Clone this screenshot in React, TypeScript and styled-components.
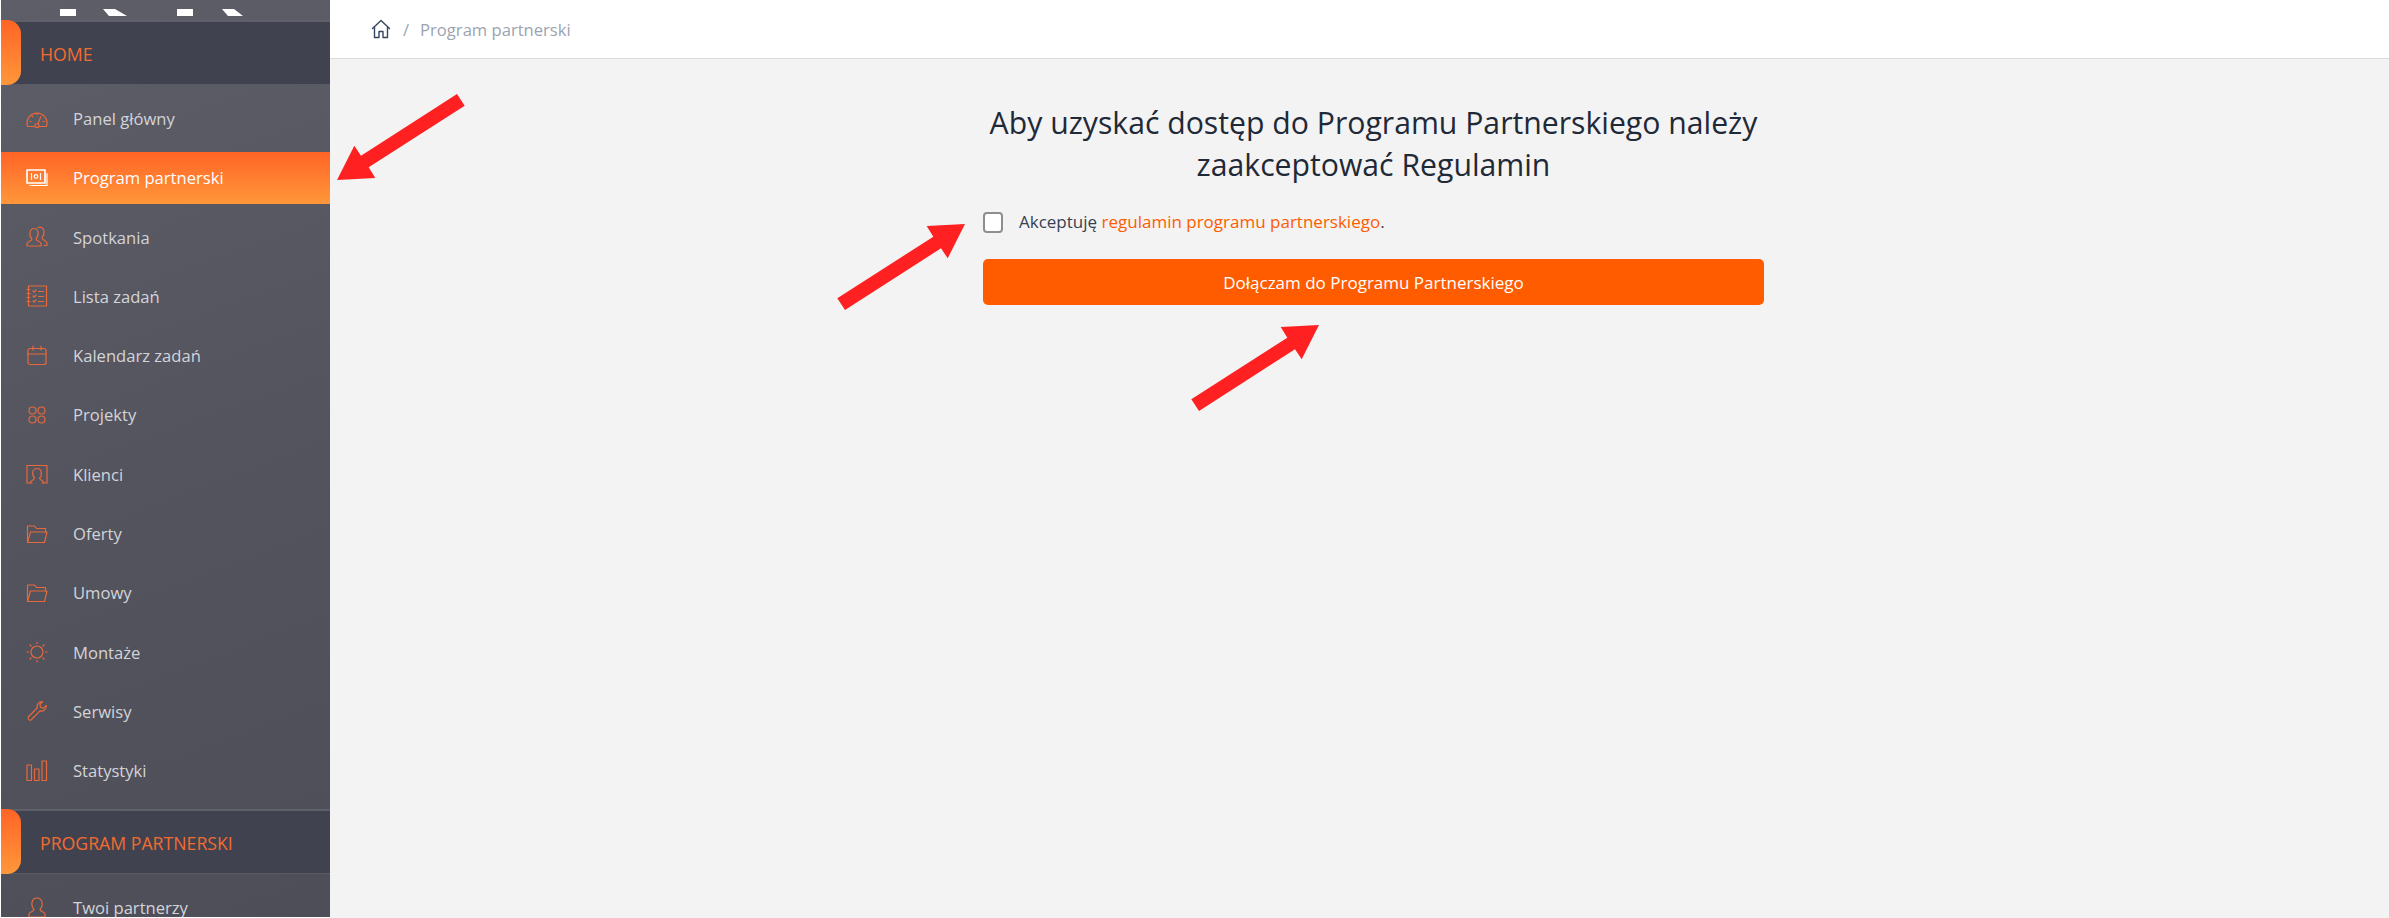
import styled, { createGlobalStyle } from 'styled-components';
import type { ReactNode } from 'react';

const GlobalStyle = createGlobalStyle`
    html, body {
        margin: 0;
        padding: 0;
        background: #FFFFFF;
    }

    * {
        box-sizing: border-box;
    }
`

const Page = styled.div`
    position: relative;
    display: flex;
    width: 2389px;
    height: 918px;
    overflow: hidden;
    font-family: "Open Sans", "Noto Sans", sans-serif;
`

const Sidebar = styled.aside`
    flex: 0 0 329px;
    height: 917px;
    margin-left: 1px;
    overflow: hidden;
    background: linear-gradient(160deg, #5E5E68 0%, #54545E 50%, #4E4E58 100%);
`

const LogoStrip = styled.div`
    height: 20px;
    padding-left: 59px;
`

const SectionHeader = styled.div`
    display: flex;
    align-items: center;
    height: 65px;
    background: #40434F;
    border-top: 2px solid #5F5F69;
    border-bottom: 1px solid #5A5A64;
`

const SectionTab = styled.span`
    flex: 0 0 20px;
    align-self: flex-start;
    height: 65px;
    margin-top: -2px;
    border-radius: 0 14px 14px 0;
    background: linear-gradient(180deg, #FF6426 0%, #FF973A 100%);
`

const SectionLabel = styled.span`
    margin: 2px 0 0 19px;
    color: #F26B30;
    font-size: 17.7px;
    font-weight: 500;
`

const NavList = styled.nav`
    display: flex;
    flex-direction: column;
    gap: 7.3px;
    padding: 8px 0 11.7px;
`

const NavRow = styled.a<{ $active?: boolean }>`
    display: flex;
    flex: 0 0 52px;
    align-items: center;
    padding: 0 0 1px 25px;
    color: ${({ $active }) => ($active ? '#FFFFFF' : '#D3D4D9')};
    background: ${({ $active }) => ($active ? 'linear-gradient(180deg, #FF6426 0%, #FF973A 100%)' : 'transparent')};
    font-size: 16.6px;
`

const NavIcon = styled.svg<{ $active?: boolean }>`
    flex: 0 0 22px;
    width: 22px;
    height: 22px;
    margin-right: 25px;
    fill: none;
    stroke: ${({ $active }) => ($active ? '#FFFFFF' : '#E8683A')};
    stroke-width: 1.2;
    stroke-linecap: round;
    stroke-linejoin: round;
`

const Main = styled.main`
    flex: 1;
    display: flex;
    flex-direction: column;
    background: #F3F3F3;
`

const Topbar = styled.header`
    display: flex;
    align-items: center;
    flex: 0 0 59px;
    padding-left: 41px;
    background: #FFFFFF;
    border-bottom: 1px solid #DCDCDC;
    color: #9CA3AF;
    font-size: 16.6px;
`

const HomeIcon = styled.svg`
    width: 20px;
    height: 20px;
    fill: none;
    stroke: #374660;
    stroke-width: 1.4;
    stroke-linejoin: round;
    stroke-linecap: round;
`

const Slash = styled.span`
    margin: 0 11px 0 12px;
`

const Panel = styled.section`
    display: flex;
    flex-direction: column;
    width: 781px;
    margin-left: 653px;
    padding-top: 43px;
`

const Title = styled.h1`
    margin: 0;
    color: #1F2937;
    font-size: 30.2px;
    font-weight: 500;
    line-height: 42px;
    text-align: center;
`

const AcceptRow = styled.label`
    display: flex;
    align-items: center;
    gap: 16px;
    margin-top: 24px;
    color: #374151;
    font-size: 17px;
    line-height: 24px;
`

const Checkbox = styled.input`
    appearance: none;
    width: 20px;
    height: 21px;
    margin: 0;
    background: #FFFFFF;
    border: 2px solid #8E8E8E;
    border-radius: 4px;
`

const TermsLink = styled.a`
    color: #FF5C00;
`

const JoinButton = styled.button`
    height: 46px;
    margin-top: 25px;
    border: 0;
    border-radius: 5px;
    background: #FF5C00;
    color: #FFFFFF;
    font-family: inherit;
    font-size: 17px;
`

const Arrow = styled.svg<{ $left: number; $top: number; $flip?: boolean }>`
    position: absolute;
    left: ${({ $left }) => $left}px;
    top: ${({ $top }) => $top}px;
    width: 140px;
    height: 100px;
    fill: #FF2121;
    transform: ${({ $flip }) => ($flip ? 'rotate(180deg)' : 'none')};
`

function RedArrow(props: { left: number; top: number; flip?: boolean }) {
    return (
        <Arrow $left={props.left} $top={props.top} $flip={props.flip} viewBox="0 0 140 100">
            <polygon points="2.3,83.3 10,95 106,33.3 112.7,43.3 130,9 91.7,11 98.3,21.7"/>
        </Arrow>
    )
}

const icons: Record<string, ReactNode> = {
    gauge: (
        <>
            <path d="M8.500 18.500H1.600A10 10 0 1 1 20.400 18.500H13.500"/>
            <circle cx="11" cy="17.500" r="2"/>
            <path d="M12 15.700l2.800-7M4 13.500h1.200M6 8l.8.8M11 5.500v1.200M17 13.500h1.400"/>
        </>
    ),
    money: (
        <>
            <rect x="1" y="3" width="18" height="13" strokeWidth="1.700"/>
            <circle cx="10" cy="9.500" r="1.800"/>
            <path d="M5.500 6.500v6M14.500 6.500v6M21 6.500V18.500H4"/>
        </>
    ),
    people: (
        <>
            <path d="M1 20v-2.500c0-1.500 5-2.500 5-4.500-2-2-2.500-4-2-6.500C4.500 3.500 6 2.500 8 2.500s3.500 1 4 3.500c.5 2.500 0 4.500-2 7 0 2 5 3 5 4.500V20z"/>
            <path d="M12 1.500c3-1 5.500.5 6 3.500.4 2.500 0 4.500-2 7 0 2 5 2.500 5 5v2.500h-3"/>
        </>
    ),
    list: (
        <>
            <rect x="2.500" y="1" width="18" height="20"/>
            <path d="M1 4.500h3M1 8.500h3M1 12.500h3M1 16.500h3M7 6l1.200 1.200L10 5M7 11l1.200 1.200L10 10M7 16l1.200 1.200L10 15M12.500 6.500h5M12.500 11.500h5M12.500 16.500h5"/>
        </>
    ),
    calendar: (
        <>
            <rect x="2" y="3.500" width="18" height="16" rx="2"/>
            <path d="M2 9h18M7 1v4M15 1v4"/>
        </>
    ),
    grid: (
        <>
            <circle cx="6.500" cy="6.500" r="3.500"/>
            <circle cx="15.500" cy="6.500" r="3.500"/>
            <circle cx="6.500" cy="15.500" r="3.500"/>
            <circle cx="15.500" cy="15.500" r="3.500"/>
        </>
    ),
    client: (
        <>
            <path d="M6 20H1V2.500h20V20h-5"/>
            <path d="M4 20c.5-2.500 4.500-3 4.500-5-1.500-1.500-2-3.500-1.700-6C7 7 9 5.500 11 5.500s4 1.500 4.200 4c.3 2.500-.2 4.500-1.700 5.500 0 2 4 2.500 4.500 5"/>
        </>
    ),
    folder: (
        <>
            <path d="M1.500 19.500V3h7l2 2.500h9V9"/>
            <path d="M1.500 19.500L4.500 9H21l-2.500 10.500z"/>
        </>
    ),
    sun: (
        <>
            <circle cx="11" cy="11" r="6"/>
            <path d="M11 1v1.500M11 19.500V21M1 11h1.500M19.500 11H21M4 4l1 1M17 17l1 1M4 18l1-1M17 5l1-1"/>
        </>
    ),
    wrench: (
        <path d="M2.200 17l9-9c-.8-3 1.500-6.500 5.500-6.300l-2.700 2.800.5 3 3 .6 2.800-2.700c.2 4-3.200 6.300-6.300 5.500l-9 9.100c-1.500 1-3.300-.8-2.800-3z"/>
    ),
    bars: (
        <>
            <rect x="1" y="5" width="4.500" height="15.500"/>
            <rect x="8.500" y="9" width="4.500" height="11.500"/>
            <rect x="16" y="1" width="4.500" height="19.500"/>
        </>
    ),
    person: (
        <path d="M3 21v-3c0-2 5-2.500 5-4.500-2-2-2.500-4-2-7C6.500 3.500 8.500 2 11 2s4.500 1.500 5 4.500c.5 3 0 5-2 7 0 2 5 2.500 5 4.500v3z"/>
    ),
}

const homeItems = [
    { label: 'Panel główny', icon: 'gauge' },
    { label: 'Program partnerski', icon: 'money', active: true },
    { label: 'Spotkania', icon: 'people' },
    { label: 'Lista zadań', icon: 'list' },
    { label: 'Kalendarz zadań', icon: 'calendar' },
    { label: 'Projekty', icon: 'grid' },
    { label: 'Klienci', icon: 'client' },
    { label: 'Oferty', icon: 'folder' },
    { label: 'Umowy', icon: 'folder' },
    { label: 'Montaże', icon: 'sun' },
    { label: 'Serwisy', icon: 'wrench' },
    { label: 'Statystyki', icon: 'bars' },
]

const partnerItems = [
    { label: 'Twoi partnerzy', icon: 'person' },
]

function NavItems({ items }: { items: { label: string; icon: string; active?: boolean }[] }) {
    return (
        <NavList>
            {items.map((item) => (
                <NavRow key={item.label} $active={item.active}>
                    <NavIcon $active={item.active} viewBox="0 0 22 22">{icons[item.icon]}</NavIcon>
                    {item.label}
                </NavRow>
            ))}
        </NavList>
    )
}

export default function App() {
    return (
        <Page>
            <GlobalStyle/>
            <Sidebar>
                <LogoStrip>
                    <svg width="190" height="8" viewBox="0 0 190 8" fill="#FFFFFF">
                        <polygon points="0,0 16,0 16,7 0,7"/>
                        <polygon points="43,0 55,0 67,7 49,7"/>
                        <polygon points="117,0 133,0 133,7 117,7"/>
                        <polygon points="162,0 174,0 183,7 168,7"/>
                    </svg>
                </LogoStrip>
                <SectionHeader>
                    <SectionTab/>
                    <SectionLabel>HOME</SectionLabel>
                </SectionHeader>
                <NavItems items={homeItems}/>
                <SectionHeader>
                    <SectionTab/>
                    <SectionLabel>PROGRAM PARTNERSKI</SectionLabel>
                </SectionHeader>
                <NavItems items={partnerItems}/>
            </Sidebar>
            <Main>
                <Topbar>
                    <HomeIcon viewBox="0 0 20 20">
                        <path d="M1.500 9.500L10 1.500l8.500 8M3.500 8v10.500h4.500v-6h4v6h4.500V8"/>
                    </HomeIcon>
                    <Slash>/</Slash>
                    Program partnerski
                </Topbar>
                <Panel>
                    <Title>Aby uzyskać dostęp do Programu Partnerskiego należy zaakceptować Regulamin</Title>
                    <AcceptRow>
                        <Checkbox type="checkbox"/>
                        <span>Akceptuję <TermsLink>regulamin programu partnerskiego</TermsLink>.</span>
                    </AcceptRow>
                    <JoinButton>Dołączam do Programu Partnerskiego</JoinButton>
                </Panel>
            </Main>
            <RedArrow left={327} top={89} flip/>
            <RedArrow left={835} top={215}/>
            <RedArrow left={1189} top={316}/>
        </Page>
    )
}
